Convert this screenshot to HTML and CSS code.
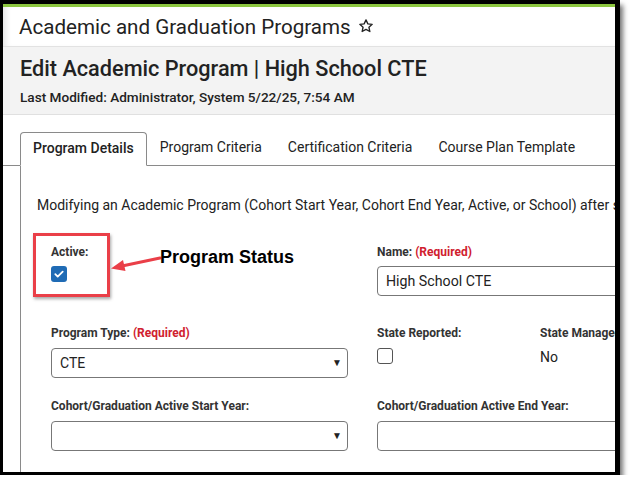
FILE: index.html
```html
<!DOCTYPE html>
<html lang="en">
<head>
    <meta charset="UTF-8">
    <title>Edit Academic Program</title>
    <link rel="stylesheet" href="styles.css">
</head>
<body>
    <div class="frame">
        <div class="green-bar"></div>
        <div class="page-header">
            <span class="page-title">Academic and Graduation Programs</span>
            <svg class="star" width="16" height="16" viewBox="0 0 24 24"><path d="M12 2.8l2.8 6 6.5.7-4.9 4.4 1.4 6.4L12 17l-5.8 3.3 1.4-6.4-4.9-4.4 6.5-.7z" fill="none" stroke="#222" stroke-width="2" stroke-linejoin="round"/></svg>
        </div>
        <div class="record-header">
            <h1>Edit Academic Program | High School CTE</h1>
            <div class="modified">Last Modified: Administrator, System 5/22/25, 7:54 AM</div>
        </div>
        <div class="tabs">
            <div class="tab active">Program Details</div>
            <div class="tab">Program Criteria</div>
            <div class="tab">Certification Criteria</div>
            <div class="tab">Course Plan Template</div>
        </div>
        <div class="panel">
            <p class="notice">Modifying an Academic Program (Cohort Start Year, Cohort End Year, Active, or School) after saving it may affect students</p>

            <div class="row row-first">
                <div class="field col-a">
                    <label>Active:</label>
                    <span class="checkbox checked">
                        <svg width="12" height="12" viewBox="0 0 12 12"><path d="M2.3 6.2l2.4 2.4 5-5" fill="none" stroke="#fff" stroke-width="1.8" stroke-linecap="round" stroke-linejoin="round"/></svg>
                    </span>
                </div>
                <div class="field col-b wide">
                    <label>Name: <span class="req">(Required)</span></label>
                    <div class="input">High School CTE</div>
                </div>
            </div>

            <div class="row">
                <div class="field col-a">
                    <label>Program Type: <span class="req">(Required)</span></label>
                    <div class="input select">CTE<span class="caret">&#9660;</span></div>
                </div>
                <div class="field col-b">
                    <label>State Reported:</label>
                    <span class="checkbox checkbox-empty"></span>
                </div>
                <div class="field col-c">
                    <label>State Managed:</label>
                    <div class="value">No</div>
                </div>
            </div>

            <div class="row">
                <div class="field col-a">
                    <label>Cohort/Graduation Active Start Year:</label>
                    <div class="input select"><span class="caret">&#9660;</span></div>
                </div>
                <div class="field col-b wide">
                    <label>Cohort/Graduation Active End Year:</label>
                    <div class="input"></div>
                </div>
            </div>

            <div class="callout-box"></div>
            <svg class="callout-arrow" width="52" height="20" viewBox="0 0 52 20">
                <path d="M50 4 L12 12" stroke="#ea3f48" stroke-width="3" stroke-linecap="round"/>
                <path d="M1 14.5 L13 6 L15.5 17 Z" fill="#ea3f48"/>
            </svg>
            <div class="callout-text">Program Status</div>
        </div>
    </div>
</body>
</html>
```

FILE: styles.css
```css
body {
    margin: 0;
    background: #fff;
    font-family: Roboto, "Liberation Sans", Arial, sans-serif;
    color: #222;
}
.frame {
    width: 612px;
    height: 468px;
    border-style: solid;
    border-color: #000;
    border-width: 4px 5px 3px 3px;
    overflow: hidden;
    box-shadow: 3px 5px 5px rgba(0,0,0,0.55);
    background: #fff;
}
.green-bar {
    height: 3px;
    background: #8cc63f;
}
.page-header {
    height: 39px;
    display: flex;
    align-items: center;
    gap: 7px;
    padding-left: 16px;
    border-bottom: 1px solid #e2e2e2;
    box-shadow: inset 6px 0 6px -4px rgba(0,0,0,0.12);
}
.page-title {
    font-size: 20.6px;
    color: #222;
}
.star {
    margin-top: -1px;
}
.record-header {
    background: #f3f3f3;
    border-bottom: 1px solid #e0e0e0;
    padding: 9px 17px 0;
    height: 58px;
}
.record-header h1 {
    margin: 0;
    font-size: 21.7px;
    font-weight: 500;
    line-height: 26px;
    color: #222;
}
.modified {
    margin-top: 7px;
    font-size: 13.6px;
    font-weight: 500;
    color: #222;
}
.tabs {
    display: flex;
    margin-top: 17px;
    padding-left: 17px;
    border-bottom: 1px solid #8a8a8a;
    height: 33px;
}
.tab {
    font-size: 14px;
    color: #222;
    line-height: 31px;
    padding: 0 13px;
}
.tab.active {
    font-weight: 500;
    border: 1px solid #8a8a8a;
    border-bottom: 1px solid #fff;
    border-radius: 4px 4px 0 0;
    height: 32px;
    padding: 0 12px;
}
.panel {
    position: relative;
    margin-left: 17px;
    border-left: 1px solid #8a8a8a;
    padding: 29px 0 0 16px;
    height: 400px;
}
.notice {
    margin: 0;
    font-size: 14px;
    line-height: 20px;
    white-space: nowrap;
    color: #222;
}
.row {
    display: flex;
    margin-top: 20px;
    margin-left: 14px;
}
.row-first {
    margin-top: 29px;
    margin-bottom: 29px;
}
.field label {
    display: block;
    font-size: 12px;
    font-weight: 700;
    line-height: 16px;
    color: #333;
    margin-bottom: 7px;
    white-space: nowrap;
}
.row-first .field label {
    margin-bottom: 6px;
}
.col-a {
    width: 297px;
    margin-right: 29px;
    flex: none;
}
.col-b {
    width: 134px;
    margin-right: 29px;
    flex: none;
}
.col-b.wide {
    width: 300px;
}
.col-c {
    width: 120px;
    flex: none;
}
.req {
    color: #d0202e;
}
.input {
    box-sizing: border-box;
    height: 30px;
    border: 1px solid #777;
    border-radius: 4px;
    font-size: 14.2px;
    line-height: 28px;
    padding-left: 8px;
    color: #222;
    position: relative;
}
.select {
    font-size: 14px;
}
.caret {
    position: absolute;
    right: 5px;
    top: 0;
    font-size: 10px;
    color: #222;
}
.checkbox {
    display: block;
    box-sizing: border-box;
    width: 16px;
    height: 16px;
    border-radius: 3px;
}
.checkbox.checked {
    background: #1f6bb5;
    display: flex;
    align-items: center;
    justify-content: center;
}
.checkbox-empty {
    border: 1px solid #555;
    margin-top: 2px;
}
.value {
    font-size: 14px;
    line-height: 18px;
    margin-top: 0;
    color: #222;
}
.callout-box {
    position: absolute;
    left: 12px;
    top: 67px;
    width: 71px;
    height: 58px;
    border: 3px solid #ea3f48;
    box-shadow: 1px 2px 3px rgba(0,0,0,0.35);
}
.callout-arrow {
    position: absolute;
    left: 89px;
    top: 88px;
}
.callout-text {
    position: absolute;
    left: 139px;
    top: 81px;
    font-family: "Liberation Sans", Arial, sans-serif;
    font-weight: 700;
    font-size: 18px;
    color: #000;
}
```
